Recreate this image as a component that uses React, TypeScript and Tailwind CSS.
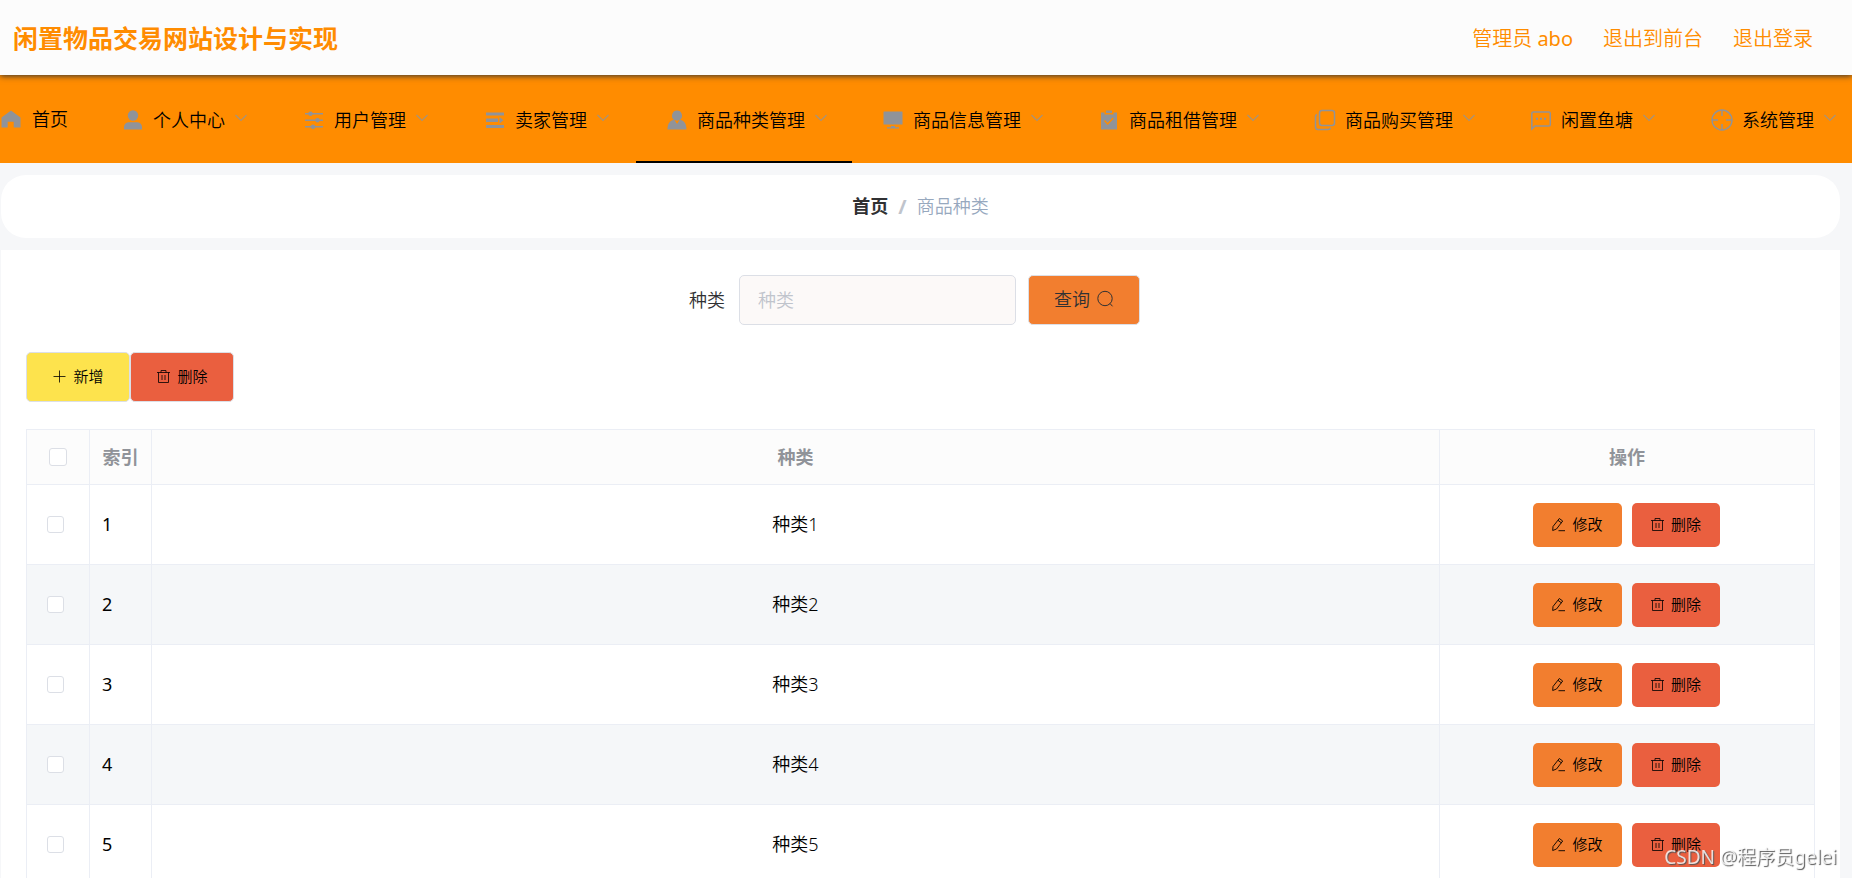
import { useState } from 'react';
import type { ReactNode } from 'react';

const menuIcons: Record<string, ReactNode> = {
  home: <path fill="currentColor" d="M11 2.5 1.5 9.5V19.5h6.2v-5.8h6v5.8h6.8V9.5z" />,
  user: (
    <g fill="currentColor">
      <circle cx="11" cy="6.5" r="5.2" />
      <path d="M2 20.5v-2.500a5 5 0 0 1 5-4.800h8a5 5 0 0 1 5 4.800v2.500z" />
    </g>
  ),
  operation: (
    <g fill="currentColor">
      <path d="M2 4h18v1.600H2zM2 10.500h18v1.600H2zM2 17h18v1.600H2z" />
      <circle cx="7.500" cy="4.800" r="2.200" />
      <circle cx="14.500" cy="11.300" r="2.200" />
      <circle cx="10" cy="17.800" r="2.200" />
    </g>
  ),
  unfold: <path fill="currentColor" d="M2 3.500h18v3H2zM2 9.500h12v3.500H2zM2 16h18v3H2zM15.500 8l4 3.300-4 3.300z" />,
  custom: (
    <path
      fill="currentColor"
      d="M11 1.500a5 5.200 0 0 1 3.200 9.200c3.900.7 6.300 4 6.300 9.800h-19c0-5.800 2.400-9.100 6.300-9.800A5 5.200 0 0 1 11 1.500zM8.500 11l2.500 4 2.500-4-2.500.8z"
      fillRule="evenodd"
    />
  ),
  platform: <path fill="currentColor" d="M2 2.500h18q.5 0 .5.500v12.500h-19V3q0-.5.500-.500zM9 17h4v1.200h4v1.300H5v-1.300h4z" />,
  claim: (
    <g>
      <path fill="currentColor" d="M3 3.500h3.500v2h9v-2H19v17H3zM8 1.500h6v2.500H8z" />
      <path fill="none" stroke="#ff8c00" strokeWidth="1.500" d="m6.500 11.500 3.200 3.500 5.500-6" />
    </g>
  ),
  copy: (
    <g fill="none" stroke="currentColor" strokeWidth="1.500">
      <rect x="5.500" y="1.500" width="15" height="15" rx="2.500" />
      <path d="M3 5.500q-1.500.3-1.500 2V18q0 2.500 2.500 2.500h10q2 0 2.500-1.800" />
    </g>
  ),
  chat: (
    <g fill="none" stroke="currentColor" strokeWidth="1.500">
      <path d="M1.800 20V4.500q0-1.500 1.500-1.500h15.500q1.500 0 1.500 1.500v11q0 1.500-1.500 1.500H5z" />
      <path strokeWidth="2" d="M6 9.800h2M10 9.800h2M14 9.800h2" />
    </g>
  ),
  aim: (
    <g fill="none" stroke="currentColor" strokeWidth="1.400">
      <circle cx="11" cy="11" r="10" />
      <path d="M11 1v6M11 15v6M1 11h6M15 11h6" />
    </g>
  ),
};

const menus = [
  { title: '个人中心', icon: 'user' },
  { title: '用户管理', icon: 'operation' },
  { title: '卖家管理', icon: 'unfold' },
  { title: '商品种类管理', icon: 'custom' },
  { title: '商品信息管理', icon: 'platform' },
  { title: '商品租借管理', icon: 'claim' },
  { title: '商品购买管理', icon: 'copy' },
  { title: '闲置鱼塘', icon: 'chat' },
  { title: '系统管理', icon: 'aim' },
];

const rows = [1, 2, 3, 4, 5].map((id) => ({ id, name: `种类${id}` }));

function MenuIcon({ name }: { name: string }) {
  return (
    <svg className="size-[22px] shrink-0 text-[#909399]" viewBox="0 0 22 22">
      {menuIcons[name]}
    </svg>
  );
}

function ArrowDown() {
  return (
    <svg className="mb-1 size-3 shrink-0" viewBox="0 0 12 12" fill="none" stroke="#a5937c" strokeWidth="1.100">
      <path d="m.5 3 5.500 5.500L11.500 3" />
    </svg>
  );
}

function PlusIcon() {
  return (
    <svg className="size-[15px]" viewBox="0 0 15 15" fill="none" stroke="currentColor" strokeWidth=".8">
      <path d="M7.500 1.500v12M1.500 7.500h12" />
    </svg>
  );
}

function TrashIcon() {
  return (
    <svg className="size-[15px]" viewBox="0 0 15 15" fill="none" stroke="currentColor" strokeWidth=".8">
      <path d="M1 3.500h13M5 3.500v-2h5v2M2.500 3.500v10h10v-10M6 6v5M9 6v5" />
    </svg>
  );
}

function EditIcon() {
  return (
    <svg className="size-[15px]" viewBox="0 0 15 15" fill="none" stroke="currentColor" strokeWidth=".9">
      <path d="M8.300 1.500 2 9.500l-.3 4 3.800-1.500 6.200-8zM7 3.300l3.300 2.500M7.500 13.700h6.500" />
    </svg>
  );
}

function SearchIcon() {
  return (
    <svg className="size-[18px]" viewBox="0 0 18 18" fill="none" stroke="currentColor" strokeWidth="1">
      <circle cx="9" cy="8.500" r="7.200" />
      <path d="m14 13.500 2.500 2.800" />
    </svg>
  );
}

const checkbox = 'block appearance-none rounded-[3px] border border-[#dcdfe6] bg-white checked:bg-[#409eff]';
const th = 'border border-[#ebeef5] p-0 font-bold';
const td = 'border border-[#ebeef5] p-0';

export default function App() {
  const [keyword, setKeyword] = useState('');
  const [selected, setSelected] = useState<number[]>([]);

  const toggle = (id: number) => {
    setSelected(selected.includes(id) ? selected.filter((s) => s !== id) : [...selected, id]);
  };

  return (
    <div className="flex h-screen flex-col overflow-hidden bg-[#f6f7f9] font-['Noto_Sans','Noto_Sans_CJK_SC',sans-serif] text-[18px] font-[350] text-black">
      <header className="relative z-10 flex h-[75px] shrink-0 items-center justify-between bg-[#fcfcfc] pr-[39px] pl-[13px] text-[#ff8c00] shadow-[0_1px_6px_#333]">
        <h1 className="pt-0.5 text-[25px] font-bold">闲置物品交易网站设计与实现</h1>
        <div className="flex gap-[30px] pt-0.5 text-xl">
          <span>
            管理员 <span className="font-normal">abo</span>
          </span>
          <a href="#front">退出到前台</a>
          <a href="#logout">退出登录</a>
        </div>
      </header>

      <nav className="grid h-22 shrink-0 grid-cols-[92fr_181fr_181fr_182fr_216fr_216fr_216fr_216fr_181fr_171fr] bg-[#ff8c00]">
        <a href="#home" className="flex items-center gap-[10px]">
          <MenuIcon name="home" />
          首页
        </a>
        {menus.map((m) => (
          <button
            key={m.title}
            className={`flex items-center border-b-2 pt-1 pl-[30px] whitespace-nowrap ${
              m.title === '商品种类管理' ? 'border-black' : 'border-transparent'
            }`}
          >
            <MenuIcon name={m.icon} />
            <span className="mr-[10px] ml-[9px]">{m.title}</span>
            <ArrowDown />
          </button>
        ))}
      </nav>

      <div className="mt-3 mr-3 ml-px flex h-[63px] shrink-0 items-center justify-center rounded-[25px] bg-white">
        <a href="#home" className="font-bold text-[#303133]">首页</a>
        <span className="mx-[10px] text-xl font-bold text-[#c0c4cc]">/</span>
        <span className="text-[#97a8be]">商品种类</span>
      </div>

      <main className="mt-3 mr-3 ml-px grow bg-white p-[25px]">
        <form className="flex items-center justify-center pr-3" onSubmit={(e) => e.preventDefault()}>
          <label htmlFor="keyword" className="mr-[14px] text-[#303133]">种类</label>
          <input
            id="keyword"
            value={keyword}
            onChange={(e) => setKeyword(e.target.value)}
            placeholder="种类"
            className="h-[50px] w-[277px] rounded-[5px] border border-[#dcdfe6] bg-[#fcf9f8] px-[18px] outline-none placeholder:text-[#c0c4cc]"
          />
          <button className="ml-3 flex h-[50px] w-28 items-center justify-center gap-1.5 rounded-[5px] border border-[#dcdfe6] bg-[#f27e2f] pb-0.5 text-[#303133]">
            查询
            <SearchIcon />
          </button>
        </form>

        <div className="mt-[27px] flex text-[15px]">
          <button className="flex h-[50px] w-[104px] items-center justify-center gap-1.5 rounded-[5px] border border-[#dcdfe6] bg-[#fde34d] pb-0.5">
            <PlusIcon />
            新增
          </button>
          <button className="flex h-[50px] w-[104px] items-center justify-center gap-1.5 rounded-[5px] border border-[#dcdfe6] bg-[#ea5f3f] pb-0.5">
            <TrashIcon />
            删除
          </button>
        </div>

        <table className="mt-[27px] w-full table-fixed border-collapse">
          <thead>
            <tr className="h-[55px] bg-[#fcfcfc] text-[#909399]">
              <th className={`${th} w-[63px]`}>
                <input
                  type="checkbox"
                  aria-label="全选"
                  checked={selected.length === rows.length}
                  onChange={() => setSelected(selected.length === rows.length ? [] : rows.map((r) => r.id))}
                  className={`${checkbox} mx-auto size-[18px]`}
                />
              </th>
              <th className={`${th} w-[62px]`}>索引</th>
              <th className={th}>种类</th>
              <th className={`${th} w-[375px]`}>操作</th>
            </tr>
          </thead>
          <tbody>
            {rows.map((row) => (
              <tr key={row.id} className="h-20 even:bg-[#f5f7f9]">
                <td className={td}>
                  <input
                    type="checkbox"
                    aria-label={row.name}
                    checked={selected.includes(row.id)}
                    onChange={() => toggle(row.id)}
                    className={`${checkbox} ml-5 size-[17px]`}
                  />
                </td>
                <td className={`${td} pl-3 font-normal`}>{row.id}</td>
                <td className={`${td} text-center`}>{row.name}</td>
                <td className={td}>
                  <div className="flex justify-center gap-[10px] pr-0.5 text-[15px]">
                    <button className="flex h-11 w-[89px] items-center justify-center gap-1.5 rounded-[5px] bg-[#f27e2f]">
                      <EditIcon />
                      修改
                    </button>
                    <button className="flex h-11 w-[88px] items-center justify-center gap-1.5 rounded-[5px] bg-[#ea5f3f]">
                      <TrashIcon />
                      删除
                    </button>
                  </div>
                </td>
              </tr>
            ))}
          </tbody>
        </table>
      </main>

      <div className="pointer-events-none fixed right-[15px] bottom-[7px] text-[19px] font-normal text-white/80 [text-shadow:1px_1px_1px_#555]">
        CSDN @程序员gelei
      </div>
    </div>
  );
}
